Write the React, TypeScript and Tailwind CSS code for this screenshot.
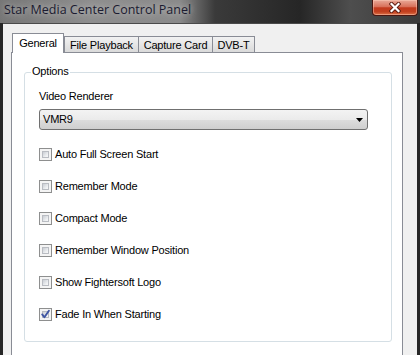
import React from 'react';

const options = [
  { label: 'Auto Full Screen Start', checked: false },
  { label: 'Remember Mode', checked: false },
  { label: 'Compact Mode', checked: false },
  { label: 'Remember Window Position', checked: false },
  { label: 'Show Fightersoft Logo', checked: false },
  { label: 'Fade In When Starting', checked: true },
];

const Checkbox: React.FC<{ checked: boolean }> = ({ checked }) => (
  <span className="relative block h-[13px] w-[13px] shrink-0 border border-[#8e8f8f] bg-[#f4f4f4] p-[2px]">
    <span className="block h-full w-full border border-[#b9bcc2] bg-[linear-gradient(135deg,#c9cdd3,#eef0f2_70%,#f7f7f7)]" />
    {checked && (
      <svg className="absolute inset-0" width="11" height="11" viewBox="0 0 11 11">
        <path d="M2.2 5.4 L4.4 8.3 L8.9 1.8" fill="none" stroke="#3f56a3" strokeWidth="1.9" strokeLinecap="round" strokeLinejoin="round" />
      </svg>
    )}
  </span>
);

const CloseButton: React.FC = () => (
  <div className="mr-[2px] flex h-[16px] w-[46px] items-center justify-center rounded-b-[4px] border border-t-0 border-[#4a1610] bg-[linear-gradient(180deg,#e9a999_0%,#d8705a_45%,#c2391e_52%,#c2401f_78%,#dd7148_100%)] shadow-[inset_0_0_0_1px_rgba(255,210,190,0.45)]">
    <svg width="12" height="11" viewBox="0 0 12 11">
      <path d="M2.5 2 L9.5 9 M9.5 2 L2.5 9" stroke="#5a1a10" strokeWidth="4" strokeLinecap="square" />
      <path d="M2.5 2 L9.5 9 M9.5 2 L2.5 9" stroke="#ffffff" strokeWidth="2.2" strokeLinecap="square" />
    </svg>
  </div>
);

export default function App() {
  return (
    <div className="flex h-[355px] w-[420px] flex-col overflow-hidden bg-[#262626] font-['Liberation_Sans',Arial,sans-serif] text-[11px] tracking-[-0.2px] text-black">
      {/* title bar */}
      <div className="flex h-[23px] shrink-0 items-start justify-between bg-[linear-gradient(90deg,#767676_0px,#8e8e8e_90px,#8a8a8a_180px,#3a3a3a_215px,#262626_300px,#4e4e4e_350px,#3a3a3a_420px)]">
        <div className="pl-[4px] pt-[1px] font-['Open_Sans',sans-serif] text-[12.5px] leading-[18px] tracking-normal text-[#1b1b30] [text-shadow:0_0_6px_#d0d0d0]">
          Star Media Center Control Panel
        </div>
        <CloseButton />
      </div>

      {/* window body */}
      <div className="mx-[3px] flex flex-1 flex-col border-t border-[#4a4a4a] bg-[#f0f0f0]">
        <div className="relative z-10 -mb-px flex items-end pl-[9px] pt-[9px]">
          <div className="flex h-[20px] w-[52px] items-center justify-center border-x border-t border-[#898c95] bg-white pb-[1px]">
            General
          </div>
          <div className="mb-px flex h-[16px] w-[75px] items-center justify-center border-x border-t border-[#898c95] bg-[linear-gradient(180deg,#f2f2f2,#e6e6e6_50%,#dadada)] pt-[1px]">
            File Playback
          </div>
          <div className="-ml-px mb-px flex h-[16px] w-[75px] items-center justify-center border-x border-t border-[#898c95] bg-[linear-gradient(180deg,#f2f2f2,#e6e6e6_50%,#dadada)] pt-[1px]">
            Capture Card
          </div>
          <div className="-ml-px mb-px flex h-[16px] w-[43px] items-center justify-center border-x border-t border-[#898c95] bg-[linear-gradient(180deg,#f2f2f2,#e6e6e6_50%,#dadada)] pt-[1px]">
            DVB-T
          </div>
        </div>

        <div className="ml-[8px] w-[392px] flex-1 border border-b-0 border-[#898c95] bg-white">
          <div className="relative ml-[12px] mt-[19px] w-[368px] rounded-[3px] border border-[#d5dfe5] pb-[20px] pl-[14px] pt-[17px]">
            <span className="absolute left-[6px] top-[-8px] bg-white px-[1px] leading-[13px]">Options</span>
            <div className="leading-[13px]">Video Renderer</div>
            <div className="mt-[6px] flex h-[21px] w-[329px] items-center justify-between rounded-[3px] border border-[#707070] bg-[linear-gradient(180deg,#f3f3f3,#ebebeb_50%,#dddddd_51%,#cfcfcf)] pl-[3px] pr-[4px]">
              <span>VMR9</span>
              <svg width="7" height="4" viewBox="0 0 7 4">
                <path d="M0 0 H7 L3.5 4 Z" fill="#000" />
              </svg>
            </div>
            <div className="mt-[18px] flex flex-col gap-[19px]">
              {options.map((o) => (
                <div key={o.label} className="flex h-[13px] items-center gap-[3px] leading-[13px]">
                  <Checkbox checked={o.checked} />
                  <span>{o.label}</span>
                </div>
              ))}
            </div>
          </div>
        </div>
      </div>
    </div>
  );
}
